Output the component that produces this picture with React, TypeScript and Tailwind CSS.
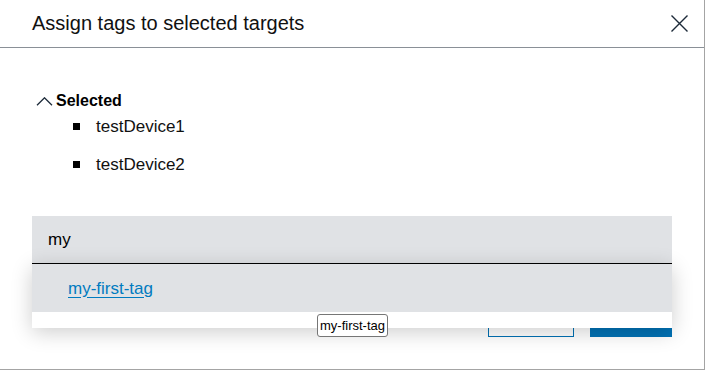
import React from 'react';

const devices = ['testDevice1', 'testDevice2'];

function ChevronUp() {
  return (
    <svg width="17" height="9" viewBox="0 0 17 9" fill="none" className="shrink-0">
      <path d="M1 8.3 L8.5 0.8 L16 8.3" stroke="#1c2a39" strokeWidth="1.3" />
    </svg>
  );
}

function CloseIcon() {
  return (
    <svg width="17" height="17" viewBox="0 0 17 17" fill="none">
      <path d="M0.5 0.5 L16.5 16.5 M16.5 0.5 L0.5 16.5" stroke="#1c2a39" strokeWidth="1.4" />
    </svg>
  );
}

export default function App() {
  return (
    <div
      className="relative w-[705px] h-[370px] overflow-hidden bg-white border-r border-b border-[#a4a4a4] text-black"
      style={{ fontFamily: '"Liberation Sans", Arial, sans-serif' }}
    >
      {/* Header */}
      <div className="h-[48px] flex items-center justify-between pl-8 pr-[16px] border-b border-[#8a9097]">
        <h1 className="text-[20px] leading-none pb-[1px] text-[#111]">Assign tags to selected targets</h1>
        <button className="flex items-center justify-center">
          <CloseIcon />
        </button>
      </div>

      {/* Body */}
      <div className="px-8 pt-[41px]">
        <div className="flex items-center gap-[3px] h-[24px] pl-[4px]">
          <ChevronUp />
          <span className="text-[16px] font-bold leading-none">Selected</span>
        </div>

        <ul className="mt-[1px] flex flex-col gap-[14px]">
          {devices.map((d) => (
            <li key={d} className="flex items-center h-[24px] pl-[41px]">
              <span className="w-[7px] h-[7px] bg-black shrink-0" />
              <span className="ml-[16px] text-[17px] leading-none text-[#111]">{d}</span>
            </li>
          ))}
        </ul>

        {/* Tag input with suggestions */}
        <div className="relative mt-[40px]">
          <div className="h-[48px] bg-[#e0e2e5] border-b border-black flex items-center pl-4">
            <span className="text-[17px] leading-none">my</span>
          </div>
          <div className="absolute left-0 right-0 top-full z-10 bg-white pb-[16px] shadow-[0_4px_20px_rgba(0,0,0,0.2)]">
            <div className="h-[48px] bg-[#e0e2e5] flex items-center pl-[36px]">
              <a className="text-[17px] leading-none text-[#007bc0] underline underline-offset-[3px]">
                my-first-tag
              </a>
            </div>
          </div>
        </div>

        {/* Footer buttons (partly hidden behind the dropdown) */}
        <div className="mt-[33px] flex justify-end gap-[16px]">
          <button className="w-[86px] h-[40px] border border-[#0071b4] text-[#0071b4] text-[16px]">Cancel</button>
          <button className="w-[82px] h-[40px] bg-[#0071b4] text-white text-[16px]">Assign</button>
        </div>
      </div>

      {/* Tooltip */}
      <div className="absolute left-[317px] top-[314px] z-20 h-[23px] px-[2px] flex items-center bg-white border border-[#767676] rounded-[3px] text-[13px] leading-none text-black">
        my-first-tag
      </div>
    </div>
  );
}
